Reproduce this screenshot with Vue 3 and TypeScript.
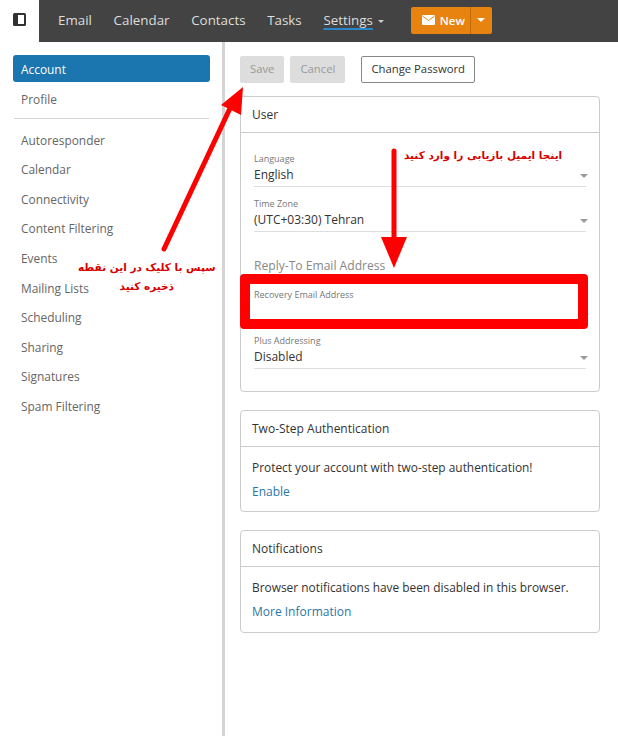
<script setup lang="ts">
const navItems: string[] = ['Email', 'Calendar', 'Contacts', 'Tasks']
const groupOne: string[] = ['Account', 'Profile']
const groupTwo: string[] = [
  'Autoresponder',
  'Calendar',
  'Connectivity',
  'Content Filtering',
  'Events',
  'Mailing Lists',
  'Scheduling',
  'Sharing',
  'Signatures',
  'Spam Filtering',
]
</script>

<template>
  <div class="page">
    <header class="topbar">
      <div class="toggle">
        <svg width="13" height="13" viewBox="0 0 13 13">
          <rect x="0" y="0" width="13" height="13" rx="1.5" fill="#333" />
          <rect x="5" y="2" width="6" height="9" fill="#fff" />
        </svg>
      </div>
      <nav class="nav">
        <a v-for="item in navItems" :key="item" class="nav_item">{{ item }}</a>
        <a class="nav_item settings"><span class="squiggle">Settings</span><i class="caret small"></i></a>
        <div class="new_btn">
          <span class="new_main">
            <svg width="13" height="10" viewBox="0 0 13 10">
              <rect width="13" height="10" rx="1" fill="#fff" />
              <path d="M0.5 1 L6.5 5.5 L12.5 1" fill="none" stroke="#e8830f" stroke-width="1" />
            </svg>
            New
          </span>
          <span class="new_drop"><i class="caret white"></i></span>
        </div>
      </nav>
    </header>

    <div class="body">
      <aside class="sidebar">
        <a v-for="(item, i) in groupOne" :key="item" class="side_item" :class="{ active: i === 0 }">{{ item }}</a>
        <div class="side_divider"></div>
        <a v-for="item in groupTwo" :key="item" class="side_item">{{ item }}</a>
      </aside>

      <main class="content">
        <div class="actions">
          <button class="btn disabled save">Save</button>
          <button class="btn disabled">Cancel</button>
          <button class="btn outline">Change Password</button>
        </div>

        <section class="card user_card">
          <div class="card_head">User</div>
          <div class="card_body form">
            <div class="field select">
              <label>Language</label>
              <div class="value">English</div>
              <i class="caret grey"></i>
            </div>
            <div class="field select">
              <label>Time Zone</label>
              <div class="value">(UTC+03:30) Tehran</div>
              <i class="caret grey"></i>
            </div>
            <div class="placeholder">Reply-To Email Address</div>
            <div class="field recovery">
              <label>Recovery Email Address</label>
            </div>
            <div class="field select">
              <label>Plus Addressing</label>
              <div class="value">Disabled</div>
              <i class="caret grey"></i>
            </div>
          </div>
        </section>

        <section class="card">
          <div class="card_head">Two-Step Authentication</div>
          <div class="card_body">
            <p>Protect your account with two-step authentication!</p>
            <a class="link">Enable</a>
          </div>
        </section>

        <section class="card">
          <div class="card_head">Notifications</div>
          <div class="card_body notif">
            <p>Browser notifications have been disabled in this browser.</p>
            <a class="link">More Information</a>
          </div>
        </section>
      </main>
    </div>

    <!-- red annotations on top of the screenshot -->
    <div class="red_box"></div>
    <svg class="arrows" width="618" height="736" viewBox="0 0 618 736">
      <path d="M164 249 L232 104" stroke="#fe0000" stroke-width="5" stroke-linecap="round" fill="none" />
      <polygon points="243,87 221,105 241,115" fill="#fe0000" />
      <path d="M394 151 L394 240" stroke="#fe0000" stroke-width="5" stroke-linecap="round" fill="none" />
      <polygon points="381,237 407,237 394,268" fill="#fe0000" />
    </svg>
    <div class="note note_top" dir="rtl">اینجا ایمیل بازیابی را وارد کنید</div>
    <div class="note note_left" dir="rtl">سپس با کلیک در این نقطه<br />ذخیره کنید</div>
  </div>
</template>

<style scoped>
.page {
  position: relative;
  width: 618px;
  height: 736px;
  overflow: hidden;
  background: #fff;
  color: #333;
  font-family: "Open Sans", sans-serif;
  font-size: 12px;
}

.topbar {
  display: flex;
  height: 42px;
}

.toggle {
  width: 39px;
  display: flex;
  align-items: center;
  justify-content: center;
  padding-bottom: 3px;
  box-sizing: border-box;
}

.nav {
  flex: 1;
  display: flex;
  align-items: center;
  background: #434343;
  padding-left: 19px;
  padding-bottom: 2px;
  box-sizing: border-box;
}

.nav_item {
  color: #ddd;
  margin-right: 21.7px;
  font-size: 13.35px;
}

.squiggle {
  text-decoration: underline;
  text-decoration-color: #2a86c8;
  text-decoration-thickness: 1.5px;
  text-underline-offset: 3px;
}

.settings {
  margin-right: 27px;
}

.caret {
  display: inline-block;
  width: 0;
  height: 0;
  border-left: 4px solid transparent;
  border-right: 4px solid transparent;
  border-top: 4px solid #999;
}

.caret.small {
  margin-left: 5px;
  vertical-align: 2px;
  border-left-width: 3px;
  border-right-width: 3px;
  border-top: 3px solid #ccc;
}

.caret.white {
  border-top-color: #fff;
}

.new_btn {
  display: flex;
  height: 27px;
  background: #e8830f;
  border-radius: 2px;
  color: #fff;
  font-weight: 600;
  font-size: 11.5px;
}

.new_main {
  display: flex;
  align-items: center;
  gap: 5px;
  padding: 0 5px 0 11px;
  border-right: 1px solid #bd6c0c;
}

.new_drop {
  display: flex;
  align-items: center;
  justify-content: center;
  width: 21px;
}

.body {
  display: flex;
  height: 694px;
}

.sidebar {
  width: 225px;
  box-sizing: border-box;
  border-right: 3px solid #d4d4d4;
  padding: 13px 12px 0 13px;
  flex-shrink: 0;
}

.side_item {
  display: block;
  height: 29.6px;
  line-height: 29.6px;
  padding-left: 8px;
  color: #666;
  font-size: 11.9px;
}

.side_item.active {
  height: 27px;
  line-height: 28px;
  margin-bottom: 2.6px;
  background: #1b75ae;
  color: #fff;
  border-radius: 3px;
}

.side_divider {
  height: 1px;
  background: #d4d4d4;
  margin: 3.4px 1px 7.1px;
}

.content {
  flex: 1;
  padding: 14px 18px 0 15px;
  min-width: 0;
}

.actions {
  display: flex;
  gap: 6px;
  margin-bottom: 13px;
}

.btn {
  height: 27px;
  padding: 0 9px 2px;
  border: 1px solid #ddd;
  border-radius: 2px;
  font-family: inherit;
  font-size: 11.3px;
  background: #fff;
}

.btn.disabled {
  background: #ddd;
  color: #999;
}

.btn.outline {
  margin-left: 10px;
  border-color: #888;
  color: #333;
}

.card {
  border: 1px solid #ccc;
  border-radius: 4px;
  margin-bottom: 18px;
}

.card_head {
  height: 35px;
  line-height: 35px;
  padding-left: 11px;
  border-bottom: 1px solid #ccc;
  color: #333;
  font-size: 12px;
}

.card_body {
  padding: 9.5px 11px 9px;
}

.card_body p {
  margin: 0 0 5.5px;
  line-height: 20px;
  font-size: 11.9px;
}

.card_body.notif {
  padding-top: 10.4px;
  padding-bottom: 10px;
}

.card_body.notif p {
  margin-bottom: 4.6px;
}

.link {
  display: block;
  line-height: 20px;
  color: #2a76a8;
  font-size: 12px;
}

.form {
  padding: 20px 13px 0;
}

.field {
  position: relative;
  height: 33px;
}

.field + .field {
  margin-top: 11px;
}

.field label {
  display: block;
  font-size: 9px;
  line-height: 12px;
  color: #777;
}

.value {
  font-size: 12px;
  line-height: 19px;
  color: #333;
}

.select {
  border-bottom: 1px solid #ddd;
}

.select .caret {
  position: absolute;
  right: -2px;
  top: 21px;
}

.placeholder {
  margin-top: 25px;
  font-size: 12.1px;
  line-height: 18px;
  color: #888;
}

.recovery {
  margin-top: 14px;
  height: 36px;
}

.recovery + .field {
  margin-top: 10px;
}

.user_card {
  height: 296px;
  box-sizing: border-box;
}

.red_box {
  position: absolute;
  left: 240px;
  top: 274px;
  width: 348px;
  height: 55px;
  box-sizing: border-box;
  border: 10px solid #fe0000;
  border-radius: 4px;
}

.arrows {
  position: absolute;
  left: 0;
  top: 0;
}

.note {
  position: absolute;
  color: #d80000;
  font-family: "DejaVu Sans", sans-serif;
  font-size: 10.5px;
  font-weight: 700;
  white-space: nowrap;
  text-align: center;
}

.note_top {
  left: 404px;
  top: 149px;
}

.note_left {
  left: 78px;
  top: 258px;
  line-height: 19px;
}
</style>
